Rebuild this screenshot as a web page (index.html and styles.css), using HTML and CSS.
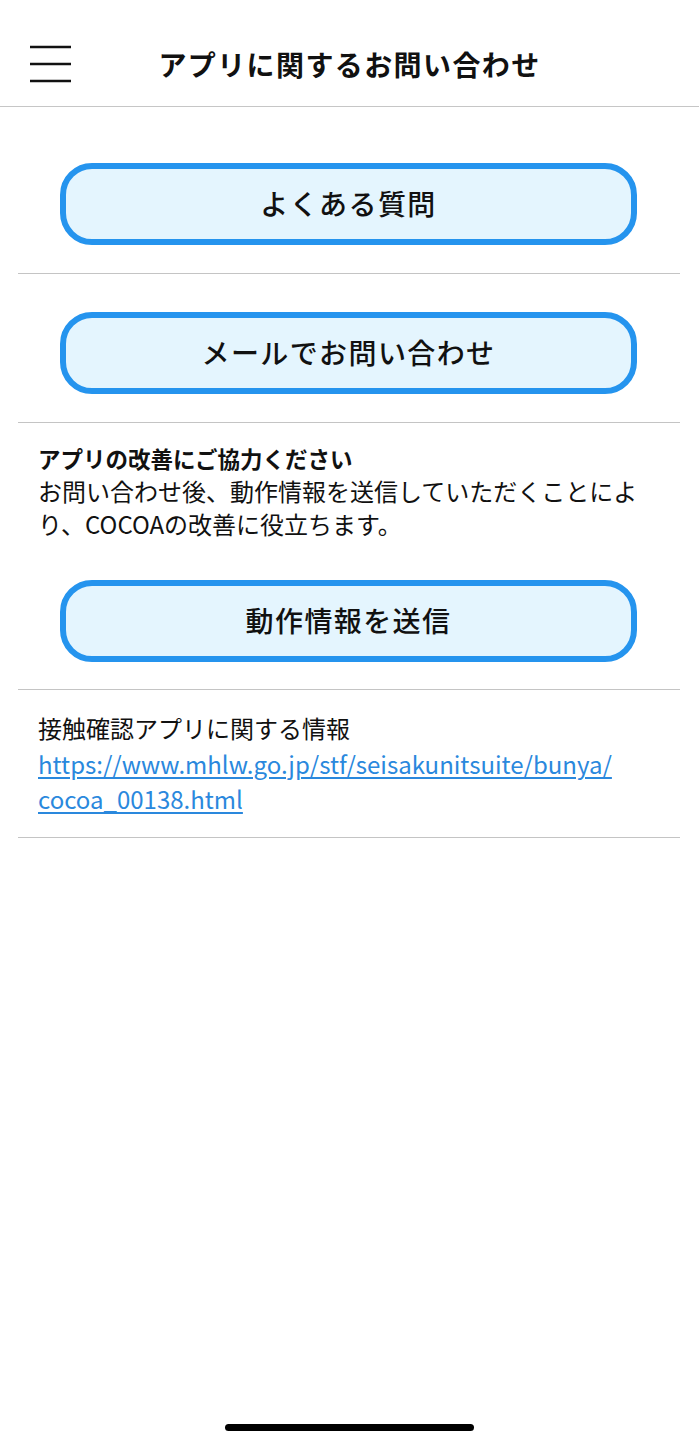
FILE: index.html
```html
<!DOCTYPE html>
<html lang="ja">
<head>
<meta charset="utf-8">
<title>アプリに関するお問い合わせ</title>
<link rel="stylesheet" href="styles.css">
</head>
<body>
<header class="header">
  <div class="header-left">
    <svg class="menu-icon" width="42" height="38" viewBox="0 0 42 38" aria-hidden="true">
      <line x1="0" y1="2" x2="41" y2="2" stroke="#111" stroke-width="2.6"/>
      <line x1="0" y1="19" x2="41" y2="19" stroke="#111" stroke-width="2.6"/>
      <line x1="0" y1="36" x2="41" y2="36" stroke="#111" stroke-width="2.6"/>
    </svg>
  </div>
  <h1 class="title">アプリに関するお問い合わせ</h1>
  <div class="header-right"></div>
</header>

<main class="content">
  <section class="section section-faq">
    <button class="pill-button">よくある質問</button>
  </section>
  <section class="section section-mail">
    <button class="pill-button">メールでお問い合わせ</button>
  </section>
  <section class="section section-log">
    <p class="lead">アプリの改善にご協力ください</p>
    <p class="body-text">お問い合わせ後、動作情報を送信していただくことにより、COCOAの改善に役立ちます。</p>
    <button class="pill-button">動作情報を送信</button>
  </section>
  <section class="section section-info">
    <p class="info-text">接触確認アプリに関する情報<br><a class="link" href="#">https://www.mhlw.go.jp/stf/seisakunitsuite/bunya/<wbr>cocoa_00138.html</a></p>
  </section>
</main>

<div class="home-indicator"></div>
</body>
</html>
```

FILE: styles.css
```css
* { box-sizing: border-box; }

html, body {
  margin: 0;
  padding: 0;
  background: #ffffff;
}

body {
  width: 699px;
  height: 1448px;
  position: relative;
  font-family: "Noto Sans CJK JP", "Noto Sans", sans-serif;
  color: #111111;
  overflow: hidden;
}

.header {
  height: 107px;
  padding-top: 22px;
  display: grid;
  grid-template-columns: 1fr auto 1fr;
  align-items: center;
  border-bottom: 1px solid #c6c6c6;
}

.header-left {
  padding-left: 30px;
  display: flex;
  align-items: center;
}

.menu-icon { display: block; }

.title {
  margin: 0;
  font-size: 28px;
  letter-spacing: 1.4px;
  font-weight: 700;
  line-height: 1;
  color: #111111;
}

.content {
  margin: 0 19px 0 18px;
}

.section {
  border-bottom: 1.5px solid #c4c4c4;
  display: flex;
  flex-direction: column;
}

.section-faq {
  padding: 56px 0 28px;
}

.section-mail {
  padding: 38px 0 28px;
}

.section-log {
  padding: 19px 0 27px;
}

.section-info {
  padding: 20px 0 20px;
}

.pill-button {
  margin: 0 43px 0 42px;
  height: 82px;
  border: 6px solid #2594ee;
  border-radius: 32px;
  background: #e4f5fe;
  font-family: "Noto Sans CJK JP", "Noto Sans", sans-serif;
  font-size: 28px;
  letter-spacing: 1.4px;
  font-weight: 500;
  color: #111111;
  display: flex;
  align-items: center;
  justify-content: center;
  padding: 0 0 2px;
}

.lead {
  margin: 0 20px;
  font-size: 22.5px;
  font-weight: 700;
  line-height: 32px;
}

.body-text {
  margin: 0 20px 40px;
  font-size: 24px;
  line-height: 33px;
  font-weight: 400;
}

.info-text {
  margin: 0 20px;
  font-size: 24px;
  line-height: 35.5px;
  font-weight: 400;
}

.link {
  color: #2a88dd;
  text-decoration: underline;
  text-decoration-thickness: 1.5px;
  text-underline-offset: 3px;
}

.home-indicator {
  position: absolute;
  left: 225px;
  top: 1424px;
  width: 249px;
  height: 7px;
  border-radius: 4px;
  background: #000000;
}
```
